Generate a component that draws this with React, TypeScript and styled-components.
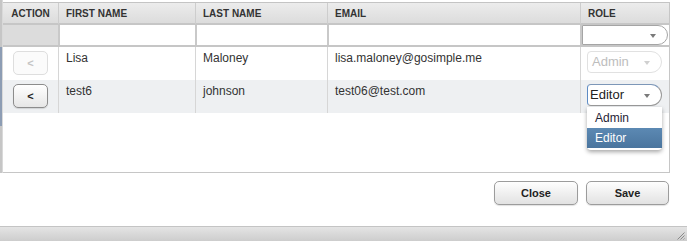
import React from "react";
import styled, { createGlobalStyle } from "styled-components";

const GlobalStyle = createGlobalStyle`
  html, body { margin: 0; padding: 0; background: #fff; }
  body {
    font-family: "Liberation Sans", Arial, sans-serif;
    width: 687px;
    height: 241px;
    overflow: hidden;
  }
  * { box-sizing: border-box; }
`;

const COLS = "55px 137px 132px 253px 89px";

const Page = styled.div`
  width: 687px;
  height: 241px;
  display: flex;
  flex-direction: column;
`;

const GridFrame = styled.div`
  display: flex;
  height: 173px;
  width: 670px;
`;

const ScrollStrip = styled.div`
  width: 3px;
  flex: 0 0 3px;
  background: linear-gradient(
    to bottom,
    #c6c6c6 0px,
    #c6c6c6 47px,
    #8d9db4 47px,
    #8d9db4 126px,
    #c6c6c6 126px
  );
  box-shadow: inset -1px 0 0 #d9d9d9;
`;

const Grid = styled.div`
  flex: 1;
  margin-top: 2px;
  border-top: 1px solid #c4c4c4;
  border-right: 1px solid #c6c6c6;
  border-bottom: 1px solid #c6c6c6;
  display: flex;
  flex-direction: column;
  background: #fff;
`;

const HeaderRow = styled.div`
  display: grid;
  grid-template-columns: ${COLS};
  height: 22px;
  background: linear-gradient(to bottom, #ececec, #dcdcdc);
  border-bottom: 2px solid #c6c6c6;
`;

const HeaderCell = styled.div<{ $first?: boolean }>`
  border-left: ${(p) => (p.$first ? "none" : "1px solid #cdcdcd")};
  padding-left: ${(p) => (p.$first ? "0" : "7px")};
  text-align: ${(p) => (p.$first ? "center" : "left")};
  font-size: 10px;
  font-weight: bold;
  line-height: 21px;
  color: #333;
  text-transform: uppercase;
  white-space: nowrap;
`;

const FilterRow = styled.div`
  display: grid;
  grid-template-columns: ${COLS};
  height: 22px;
  border-bottom: 2px solid #c6c6c6;
`;

const FilterCell = styled.div<{ $blank?: boolean }>`
  background: ${(p) => (p.$blank ? "#dcdcdc" : "#fff")};
  border-left: ${(p) => (p.$blank ? "none" : "2px solid #c9c9c9")};
  display: flex;
  align-items: stretch;
`;

const FilterSelect = styled.div`
  position: relative;
  width: 86px;
  height: 20px;
  border: 1px solid #a5a5a5;
  border-radius: 0 10px 10px 0;
  background: #fff;
`;

const Body = styled.div`
  display: flex;
  flex-direction: column;
  flex: 1;
`;

const DataRow = styled.div<{ $alt?: boolean }>`
  display: grid;
  grid-template-columns: ${COLS};
  height: 33px;
  background: ${(p) => (p.$alt ? "#eef0f2" : "#fff")};
`;

const Cell = styled.div`
  border-left: 1px solid #d6d6d6;
  padding: 4px 7px 0 7px;
  font-size: 12px;
  line-height: 14px;
  color: #333;
  white-space: nowrap;
`;

const ActionCell = styled.div`
  display: flex;
  justify-content: center;
  padding-top: 4px;
`;

const RoleCell = styled.div`
  border-left: 1px solid #d6d6d6;
  padding: 4px 0 0 6px;
`;

const ActionButton = styled.button<{ $disabled?: boolean }>`
  width: 35px;
  height: 24px;
  padding: 0;
  border-radius: 5px;
  font-family: "Liberation Sans", Arial, sans-serif;
  font-size: 11px;
  font-weight: bold;
  line-height: 22px;
  border: 1px solid ${(p) => (p.$disabled ? "#dedede" : "#8c8c8c")};
  color: ${(p) => (p.$disabled ? "#c4c4c4" : "#222")};
  background: ${(p) =>
    p.$disabled ? "#fbfbfb" : "linear-gradient(to bottom, #ffffff, #e6e6e6)"};
  box-shadow: ${(p) => (p.$disabled ? "none" : "0 1px 1px rgba(0,0,0,0.12)")};
`;

const SelectWrap = styled.div`
  position: relative;
  width: 75px;
  height: 22px;
`;

const SelectBox = styled.div<{ $disabled?: boolean; $focused?: boolean }>`
  width: 75px;
  height: 22px;
  border: 1px solid ${(p) => (p.$disabled ? "#e1e1e1" : "#9a9a9a")};
  border-left-color: ${(p) =>
    p.$focused ? "#5d8bc4" : p.$disabled ? "#e1e1e1" : "#9a9a9a"};
  border-top-color: ${(p) =>
    p.$focused ? "#7d97b8" : p.$disabled ? "#e1e1e1" : "#9a9a9a"};
  border-radius: 4px 11px 11px 4px;
  background: #fff;
  font-size: 13px;
  line-height: 20px;
  padding-left: ${(p) => (p.$disabled ? "4px" : "2px")};
  color: ${(p) => (p.$disabled ? "#bdbdbd" : "#222")};
  position: relative;
`;

const Arrow = styled.span<{ $disabled?: boolean; $top?: number }>`
  position: absolute;
  right: 11px;
  top: ${(p) => p.$top ?? 9}px;
  width: 0;
  height: 0;
  border-left: 3.5px solid transparent;
  border-right: 3.5px solid transparent;
  border-top: 4px solid ${(p) => (p.$disabled ? "#d0d0d0" : "#7a7a7a")};
`;

const Menu = styled.ul`
  position: absolute;
  top: 23px;
  left: 0;
  width: 75px;
  margin: 0;
  padding: 1px 0 2px 0;
  list-style: none;
  background: #fff;
  border-radius: 0 0 4px 4px;
  box-shadow: 0 2px 4px rgba(0, 0, 0, 0.35);
  z-index: 10;
`;

const MenuItem = styled.li<{ $active?: boolean }>`
  height: 20px;
  line-height: 20px;
  padding-left: 8px;
  font-size: 12px;
  color: ${(p) => (p.$active ? "#fff" : "#1f2336")};
  background: ${(p) =>
    p.$active ? "linear-gradient(to bottom, #5c89b3, #4a759e)" : "transparent"};
`;

const ButtonBar = styled.div`
  display: flex;
  justify-content: flex-end;
  gap: 8px;
  padding: 8px 18px 0 0;
  flex: 1;
`;

const DialogButton = styled.button<{ $w: number }>`
  width: ${(p) => p.$w}px;
  height: 24px;
  padding: 0;
  border: 1px solid #9c9c9c;
  border-radius: 5px;
  background: linear-gradient(to bottom, #fefefe, #e2e2e2);
  box-shadow: 0 1px 1px rgba(0, 0, 0, 0.12);
  font-family: "Liberation Sans", Arial, sans-serif;
  font-size: 11px;
  font-weight: bold;
  color: #222;
`;

const Footer = styled.div`
  height: 15px;
  border-top: 1px solid #c4c4c4;
  background: linear-gradient(to bottom, #e4e4e4, #cdcdcd);
  display: flex;
  justify-content: flex-end;
  align-items: flex-end;
  padding: 0 2px 1px 0;
`;

const columns = ["Action", "First Name", "Last Name", "Email", "Role"];

type Row = {
  first: string;
  last: string;
  email: string;
  role: string;
  editable: boolean;
};

const rows: Row[] = [
  { first: "Lisa", last: "Maloney", email: "lisa.maloney@gosimple.me", role: "Admin", editable: false },
  { first: "test6", last: "johnson", email: "test06@test.com", role: "Editor", editable: true },
];

export default function App() {
  return (
    <>
      <GlobalStyle />
      <Page>
        <GridFrame>
          <ScrollStrip />
          <Grid>
            <HeaderRow>
              {columns.map((c, i) => (
                <HeaderCell key={c} $first={i === 0}>
                  {c}
                </HeaderCell>
              ))}
            </HeaderRow>
            <FilterRow>
              <FilterCell $blank />
              <FilterCell />
              <FilterCell />
              <FilterCell />
              <FilterCell>
                <FilterSelect>
                  <Arrow $top={8} />
                </FilterSelect>
              </FilterCell>
            </FilterRow>
            <Body>
              {rows.map((r, i) => (
                <DataRow key={r.first} $alt={i % 2 === 1}>
                  <ActionCell>
                    <ActionButton $disabled={!r.editable}>&lt;</ActionButton>
                  </ActionCell>
                  <Cell>{r.first}</Cell>
                  <Cell>{r.last}</Cell>
                  <Cell>{r.email}</Cell>
                  <RoleCell>
                    <SelectWrap>
                      <SelectBox $disabled={!r.editable} $focused={r.editable}>
                        {r.role}
                        <Arrow $disabled={!r.editable} />
                      </SelectBox>
                      {r.editable && (
                        <Menu>
                          <MenuItem>Admin</MenuItem>
                          <MenuItem $active>Editor</MenuItem>
                        </Menu>
                      )}
                    </SelectWrap>
                  </RoleCell>
                </DataRow>
              ))}
            </Body>
          </Grid>
        </GridFrame>
        <ButtonBar>
          <DialogButton $w={84}>Close</DialogButton>
          <DialogButton $w={83}>Save</DialogButton>
        </ButtonBar>
        <Footer>
          <svg width="9" height="9" viewBox="0 0 9 9">
            <line x1="8.5" y1="1.5" x2="1.5" y2="8.5" stroke="#8a8a8a" strokeWidth="1" />
            <line x1="8.5" y1="4.5" x2="4.5" y2="8.5" stroke="#8a8a8a" strokeWidth="1" />
            <line x1="8.5" y1="7.5" x2="7.5" y2="8.5" stroke="#8a8a8a" strokeWidth="1" />
          </svg>
        </Footer>
      </Page>
    </>
  );
}
